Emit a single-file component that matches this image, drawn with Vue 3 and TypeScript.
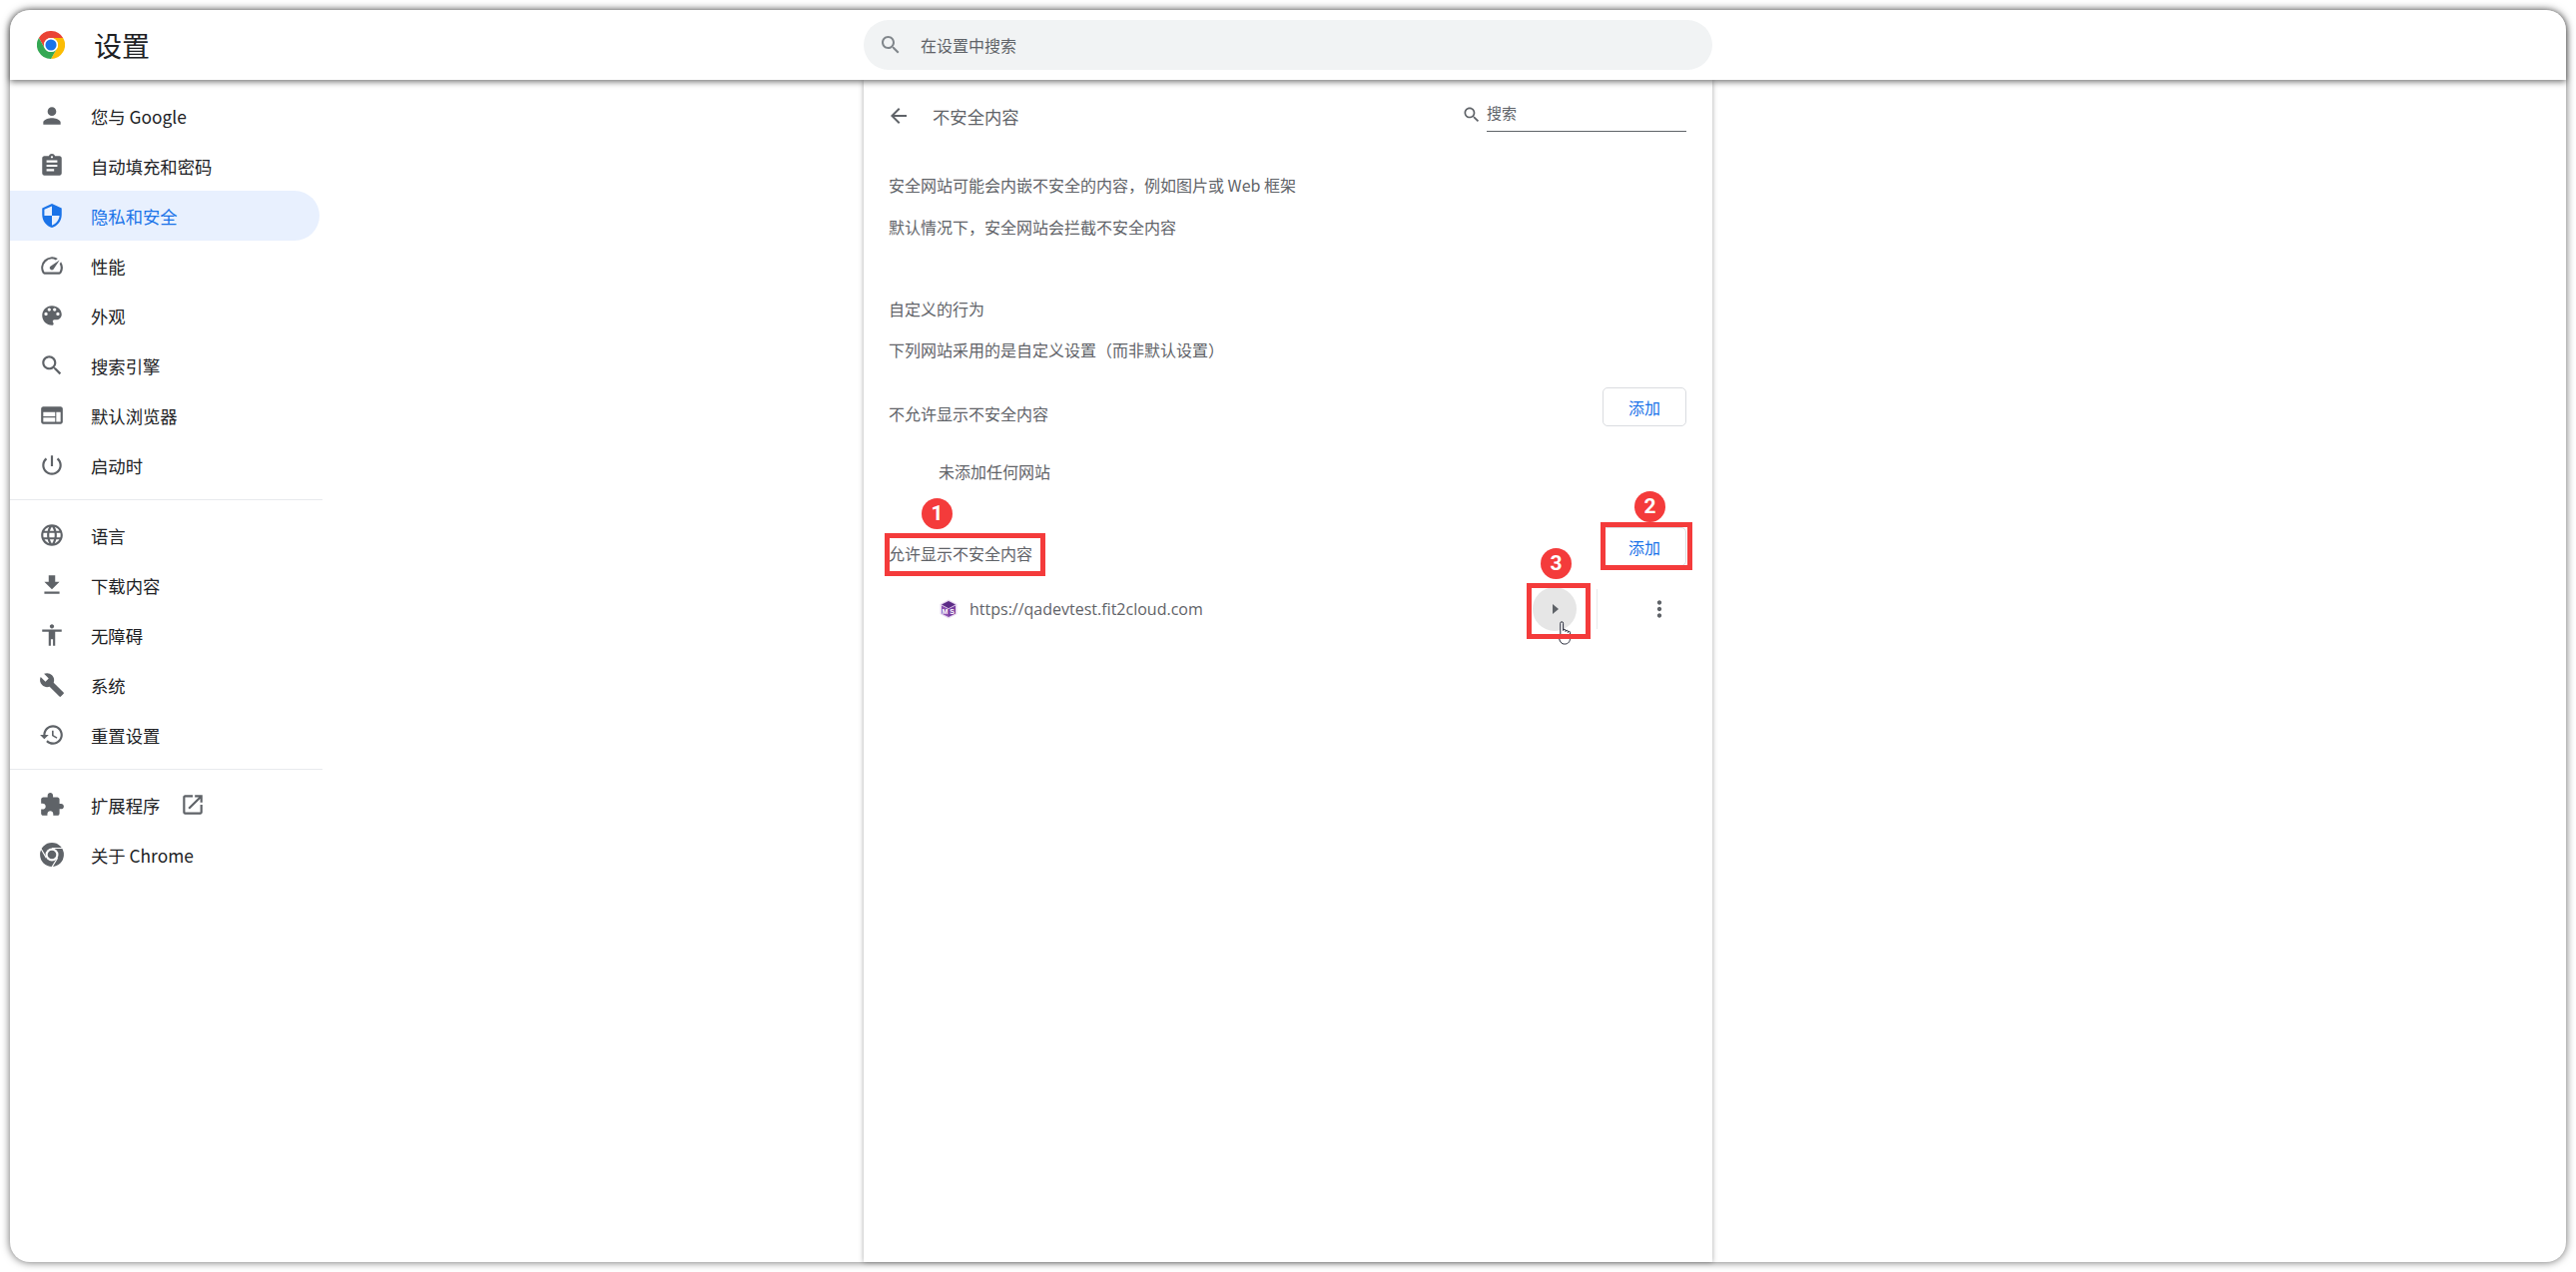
<script setup lang="ts">
interface NavItem {
  label: string
  d: string
  active?: boolean
  external?: boolean
  chrome?: boolean
}

const P = {
  person: 'M12 12c2.21 0 4-1.79 4-4s-1.79-4-4-4-4 1.79-4 4 1.79 4 4 4zm0 2c-2.67 0-8 1.34-8 4v2h16v-2c0-2.66-5.33-4-8-4z',
  clip: 'M19 3h-4.18C14.4 1.84 13.3 1 12 1c-1.3 0-2.4.84-2.82 2H5c-1.1 0-2 .9-2 2v14c0 1.1.9 2 2 2h14c1.1 0 2-.9 2-2V5c0-1.1-.9-2-2-2zm-7 0c.55 0 1 .45 1 1s-.45 1-1 1-1-.45-1-1 .45-1 1-1zm2 14H7v-2h7v2zm3-4H7v-2h10v2zm0-4H7V7h10v2z',
  shield: 'M12 1L3 5v6c0 5.55 3.84 10.74 9 12 5.16-1.26 9-6.45 9-12V5l-9-4zm0 10.99h7c-.53 4.12-3.28 7.79-7 8.94V12H5V6.3l7-3.11v8.8z',
  speed: 'M20.38 8.57l-1.23 1.85a8 8 0 0 1-.22 7.58H5.07A8 8 0 0 1 15.58 6.85l1.85-1.23A10 10 0 0 0 3.35 19a2 2 0 0 0 1.72 1h13.85a2 2 0 0 0 1.74-1 10 10 0 0 0-.27-10.44zm-9.79 6.84a2 2 0 0 0 2.83 0l5.66-8.49-8.49 5.66a2 2 0 0 0 0 2.83z',
  palette: 'M12 3c-4.97 0-9 4.03-9 9s4.03 9 9 9c.83 0 1.5-.67 1.5-1.5 0-.39-.15-.74-.39-1.01-.23-.26-.38-.61-.38-.99 0-.83.67-1.5 1.5-1.5H16c2.76 0 5-2.24 5-5 0-4.42-4.03-8-9-8zm-5.5 9c-.83 0-1.5-.67-1.5-1.5S5.67 9 6.5 9 8 9.67 8 10.5 7.33 12 6.5 12zm3-4C8.67 8 8 7.33 8 6.5S8.67 5 9.5 5s1.5.67 1.5 1.5S10.33 8 9.5 8zm5 0c-.83 0-1.5-.67-1.5-1.5S13.67 5 14.5 5s1.5.67 1.5 1.5S15.33 8 14.5 8zm3 4c-.83 0-1.5-.67-1.5-1.5S16.67 9 17.5 9s1.5.67 1.5 1.5-.67 1.5-1.5 1.5z',
  search: 'M15.5 14h-.79l-.28-.27C15.41 12.59 16 11.11 16 9.5 16 5.91 13.09 3 9.5 3S3 5.91 3 9.5 5.91 16 9.5 16c1.61 0 3.09-.59 4.23-1.57l.27.28v.79l5 4.99L20.49 19l-4.99-5zm-6 0C7.01 14 5 11.99 5 9.5S7.01 5 9.5 5 14 7.01 14 9.5 11.99 14 9.5 14z',
  web: 'M20 4H4c-1.1 0-1.99.9-1.99 2L2 18c0 1.1.9 2 2 2h16c1.1 0 2-.9 2-2V6c0-1.1-.9-2-2-2zm-5 14H4v-4h11v4zm0-5H4V9h11v4zm5 5h-4V9h4v9z',
  power: 'M13 3h-2v10h2V3zm4.83 2.17l-1.42 1.42C17.99 7.86 19 9.81 19 12c0 3.87-3.13 7-7 7s-7-3.13-7-7c0-2.19 1.01-4.14 2.58-5.42L6.17 5.17C4.23 6.82 3 9.26 3 12c0 4.97 4.03 9 9 9s9-4.03 9-9c0-2.74-1.23-5.18-3.17-6.83z',
  globe: 'M11.99 2C6.47 2 2 6.48 2 12s4.47 10 9.99 10C17.52 22 22 17.52 22 12S17.52 2 11.99 2zm6.93 6h-2.95c-.32-1.25-.78-2.45-1.38-3.56 1.84.63 3.37 1.91 4.33 3.56zM12 4.04c.83 1.2 1.48 2.53 1.91 3.96h-3.82c.43-1.43 1.08-2.76 1.91-3.96zM4.26 14C4.1 13.36 4 12.69 4 12s.1-1.36.26-2h3.38c-.08.66-.14 1.32-.14 2 0 .68.06 1.34.14 2H4.26zm.82 2h2.95c.32 1.25.78 2.45 1.38 3.56-1.84-.63-3.37-1.9-4.33-3.56zm2.95-8H5.08c.96-1.66 2.49-2.93 4.33-3.56C8.81 5.55 8.35 6.75 8.03 8zM12 19.96c-.83-1.2-1.48-2.53-1.91-3.96h3.82c-.43 1.43-1.08 2.76-1.91 3.96zM14.34 14H9.66c-.09-.66-.16-1.32-.16-2 0-.68.07-1.35.16-2h4.68c.09.65.16 1.32.16 2 0 .68-.07 1.34-.16 2zm.25 5.56c.6-1.11 1.06-2.31 1.38-3.56h2.95c-.96 1.65-2.49 2.93-4.33 3.56zM16.36 14c.08-.66.14-1.32.14-2 0-.68-.06-1.34-.14-2h3.38c.16.64.26 1.31.26 2s-.1 1.36-.26 2h-3.38z',
  download: 'M19 9h-4V3H9v6H5l7 7 7-7zM5 18v2h14v-2H5z',
  access: 'M12 2c1.1 0 2 .9 2 2s-.9 2-2 2-2-.9-2-2 .9-2 2-2zm9 7h-6v13h-2v-6h-2v6H9V9H3V7h18v2z',
  wrench: 'M22.7 19l-9.1-9.1c.9-2.3.4-5-1.5-6.9-2-2-5-2.4-7.4-1.3L9 6 6 9 1.6 4.7C.4 7.1.9 10.1 2.9 12.1c1.9 1.9 4.6 2.4 6.9 1.5l9.1 9.1c.4.4 1 .4 1.4 0l2.3-2.3c.5-.4.5-1.1.1-1.4z',
  history: 'M13 3c-4.97 0-9 4.03-9 9H1l3.89 3.89.07.14L9 12H6c0-3.87 3.13-7 7-7s7 3.13 7 7-3.13 7-7 7c-1.93 0-3.68-.79-4.94-2.06l-1.42 1.42C8.27 19.99 10.51 21 13 21c4.97 0 9-4.03 9-9s-4.03-9-9-9zm-1 5v5l4.28 2.54.72-1.21-3.5-2.08V8H12z',
  puzzle: 'M20.5 11H19V7c0-1.1-.9-2-2-2h-4V3.5C13 2.12 11.88 1 10.5 1S8 2.12 8 3.5V5H4c-1.1 0-1.99.9-1.99 2v3.8H3.5c1.49 0 2.7 1.21 2.7 2.7s-1.21 2.7-2.7 2.7H2V20c0 1.1.9 2 2 2h3.8v-1.5c0-1.49 1.21-2.7 2.7-2.7 1.49 0 2.7 1.21 2.7 2.7V22H17c1.1 0 2-.9 2-2v-4h1.5c1.38 0 2.5-1.12 2.5-2.5S21.88 11 20.5 11z',
  open: 'M19 19H5V5h7V3H5c-1.11 0-2 .9-2 2v14c0 1.1.89 2 2 2h14c1.1 0 2-.9 2-2v-7h-2v7zM14 3v2h3.59l-9.83 9.83 1.41 1.41L19 6.41V10h2V3h-7z',
  back: 'M20 11H7.83l5.59-5.59L12 4l-8 8 8 8 1.41-1.41L7.83 13H20v-2z',
}

const navGroups: NavItem[][] = [
  [
    { label: '您与 Google', d: P.person },
    { label: '自动填充和密码', d: P.clip },
    { label: '隐私和安全', d: P.shield, active: true },
    { label: '性能', d: P.speed },
    { label: '外观', d: P.palette },
    { label: '搜索引擎', d: P.search },
    { label: '默认浏览器', d: P.web },
    { label: '启动时', d: P.power },
  ],
  [
    { label: '语言', d: P.globe },
    { label: '下载内容', d: P.download },
    { label: '无障碍', d: P.access },
    { label: '系统', d: P.wrench },
    { label: '重置设置', d: P.history },
  ],
  [
    { label: '扩展程序', d: P.puzzle, external: true },
    { label: '关于 Chrome', d: '', chrome: true },
  ],
]
</script>

<template>
  <div class="window">
    <header class="topbar">
      <div class="brand">
        <svg class="logo" viewBox="0 0 48 48">
          <path fill="#ea4335" d="M3.2 12A24 24 0 0 1 44.8 12H24A12 12 0 0 0 13.6 30Z" />
          <path fill="#fbbc04" d="M44.8 12A24 24 0 0 1 24 48L34.4 30A12 12 0 0 0 24 12Z" />
          <path fill="#34a853" d="M24 48A24 24 0 0 1 3.2 12L13.6 30A12 12 0 0 0 34.4 30Z" />
          <circle cx="24" cy="24" r="12" fill="#fff" />
          <circle cx="24" cy="24" r="9.5" fill="#1a73e8" />
        </svg>
        <span class="title">设置</span>
      </div>
      <div class="searchbox">
        <svg class="search-icon" viewBox="0 0 24 24"><path :d="P.search" /></svg>
        <span>在设置中搜索</span>
      </div>
    </header>

    <div class="body">
      <nav class="sidebar">
        <template v-for="(group, g) in navGroups" :key="g">
          <div v-if="g > 0" class="divider"></div>
          <div v-for="item in group" :key="item.label" class="nav-row" :class="{ active: item.active }">
            <svg v-if="item.chrome" class="nav-icon" viewBox="0 0 24 24">
              <circle cx="12" cy="12" r="11" fill="#5f6368" />
              <circle cx="12" cy="12" r="6" fill="#fff" />
              <circle cx="12" cy="12" r="4" fill="#5f6368" />
              <path d="M12 6H22.5M6.8 15L1.6 6M17.2 15L12 23.5" stroke="#fff" stroke-width="1.1" fill="none" />
            </svg>
            <svg v-else class="nav-icon" viewBox="0 0 24 24"><path :d="item.d" /></svg>
            <span>{{ item.label }}</span>
            <svg v-if="item.external" class="nav-icon ext" viewBox="0 0 24 24"><path :d="P.open" /></svg>
          </div>
        </template>
      </nav>

      <main class="card">
        <div class="sub-head">
          <svg class="back" viewBox="0 0 24 24"><path :d="P.back" /></svg>
          <span class="sub-title">不安全内容</span>
          <div class="sub-search">
            <svg viewBox="0 0 24 24"><path :d="P.search" /></svg>
            <span class="sub-input">搜索</span>
          </div>
        </div>

        <p class="line first">安全网站可能会内嵌不安全的内容，例如图片或 Web 框架</p>
        <p class="line second">默认情况下，安全网站会拦截不安全内容</p>
        <p class="line custom">自定义的行为</p>
        <p class="line custom-sub">下列网站采用的是自定义设置（而非默认设置）</p>

        <div class="list-head block-top">
          <span>不允许显示不安全内容</span>
          <button class="add">添加</button>
        </div>
        <p class="line empty">未添加任何网站</p>

        <div class="list-head allow-top">
          <span>允许显示不安全内容</span>
          <button class="add">添加</button>
        </div>
        <div class="site">
          <svg class="favicon" viewBox="0 0 20 20">
            <polygon points="10,0.5 18.5,5 18.5,15 10,19.5 1.5,15 1.5,5" fill="#e7d9ef" />
            <polygon points="10,2 17,5.6 10,9.2 3,5.6" fill="#5b2a86" />
            <polygon points="3,6.5 10,10 10,18 3,14.4" fill="#8a4fb0" />
            <polygon points="17,6.5 10,10 10,18 17,14.4" fill="#7a3fa3" />
            <text x="3.6" y="14.6" class="fav-text">M</text>
            <text x="11.2" y="14.6" class="fav-text">S</text>
          </svg>
          <span class="url">https://qadevtest.fit2cloud.com</span>
          <div class="arrow-btn"><span class="tri"></span></div>
          <div class="vsep"></div>
          <div class="kebab">
            <svg viewBox="0 0 24 24"><path d="M12 8c1.1 0 2-.9 2-2s-.9-2-2-2-2 .9-2 2 .9 2 2 2zm0 2c-1.1 0-2 .9-2 2s.9 2 2 2 2-.9 2-2-.9-2-2-2zm0 6c-1.1 0-2 .9-2 2s.9 2 2 2 2-.9 2-2-.9-2-2-2z" /></svg>
          </div>
        </div>
      </main>
    </div>

    <!-- marks laid over the screenshot -->
    <svg class="hand" viewBox="0 0 14 24">
      <path d="M2.8 14V2.2a1.4 1.4 0 0 1 2.8 0V9.5a1.2 1.2 0 0 1 2.4 0v1a1.2 1.2 0 0 1 2.4 0v1a1.1 1.1 0 0 1 2.2 0V17c0 3.4-2 6-5 6H6.4c-2 0-3-1.5-4-3L.8 15.4c-.5-1.5 1.2-2.4 2-1.4z" />
    </svg>
    <div class="mark m1"></div>
    <div class="mark m2"></div>
    <div class="mark m3"></div>
    <div class="badge b1">1</div>
    <div class="badge b2">2</div>
    <div class="badge b3">3</div>
  </div>
</template>

<style scoped>
.window {
  position: relative;
  width: 2560px;
  height: 1254px;
  margin: 10px;
  border-radius: 20px;
  background: #fff;
  box-shadow: 0 0 9px rgba(0, 0, 0, 0.6);
  font-family: "Noto Sans CJK SC", Roboto, sans-serif;
  color: #5f6368;
}

.topbar {
  position: relative;
  z-index: 2;
  display: grid;
  grid-template-columns: 1fr 850px 1fr;
  align-items: center;
  height: 70px;
  background: #fff;
  border-radius: 20px 20px 0 0;
  box-shadow: 0 2px 6px rgba(0, 0, 0, 0.55);
}

.brand {
  display: flex;
  align-items: center;
  padding-left: 27px;
}

.logo {
  width: 28px;
  height: 28px;
}

.title {
  margin-left: 29px;
  font-size: 28px;
  line-height: 36px;
  color: #202124;
}

.searchbox {
  display: flex;
  align-items: center;
  height: 50px;
  padding-left: 15px;
  border-radius: 25px;
  background: #f1f3f4;
  font-size: 16px;
}

.search-icon {
  width: 24px;
  height: 24px;
  margin-right: 18px;
  fill: #80868b;
}

.body {
  display: grid;
  grid-template-columns: 1fr 850px 1fr;
  height: 1184px;
}

.sidebar {
  padding-top: 11px;
}

.nav-row {
  display: flex;
  align-items: center;
  width: 310px;
  height: 50px;
  padding-left: 29px;
  box-sizing: border-box;
  border-radius: 0 25px 25px 0;
  font-size: 17.33px;
  color: #202124;
}

.nav-row.active {
  background: #e8f0fe;
  color: #1a73e8;
}

.nav-icon {
  flex: none;
  width: 26px;
  height: 26px;
  margin-right: 26px;
  fill: #5f6368;
}

.active .nav-icon {
  fill: #1a73e8;
}

.nav-icon.ext {
  margin: 0 0 0 20px;
}

.divider {
  width: 313px;
  height: 1px;
  margin: 9px 0 10px;
  background: #e8eaed;
}

.divider + .nav-row {
  margin-top: 0;
}

.card {
  padding: 0 26px 0 25px;
  box-sizing: border-box;
  background: #fff;
  box-shadow: 0 0 5px rgba(0, 0, 0, 0.35);
  font-size: 16px;
}

.sub-head {
  display: flex;
  align-items: center;
  height: 72px;
}

.back {
  width: 24px;
  height: 24px;
  margin-left: -2px;
  margin-right: 22px;
  fill: #5f6368;
}

.sub-title {
  font-size: 17.33px;
}

.sub-search {
  display: flex;
  align-items: center;
  margin-left: auto;
  height: 36px;
  position: relative;
  top: -1px;
}

.sub-search svg {
  width: 20px;
  height: 20px;
  margin-right: 5px;
  fill: #5f6368;
}

.sub-input {
  width: 200px;
  height: 33px;
  line-height: 30px;
  border-bottom: 1px solid #5f6368;
  font-size: 15px;
}

.line {
  margin: 0;
  height: 34px;
  line-height: 34px;
}

.first {
  margin-top: 16px;
}

.second {
  margin-top: 8px;
}

.custom {
  margin-top: 48px;
}

.custom-sub {
  margin-top: 7px;
}

.list-head {
  display: flex;
  justify-content: space-between;
  align-items: center;
  height: 52px;
}

.block-top {
  margin-top: 21px;
}

.allow-top {
  margin-top: 39px;
}

.add {
  align-self: flex-start;
  width: 84px;
  height: 39px;
  padding: 0;
  border: 1px solid #dadce0;
  border-radius: 5px;
  background: #fff;
  color: #1a73e8;
  font: inherit;
}

.empty {
  margin-top: 15px;
  padding-left: 50px;
}

.site {
  display: flex;
  align-items: center;
  height: 60px;
  padding: 0 5px 0 50px;
}

.favicon {
  width: 20px;
  height: 20px;
  margin-right: 11px;
}

.fav-text {
  font-family: "Liberation Sans", sans-serif;
  font-size: 7px;
  font-weight: 700;
  fill: #fff;
}

.url {
  font-family: "Open Sans", sans-serif;
  font-size: 16px;
  color: #5f6368;
}

.arrow-btn {
  display: flex;
  justify-content: center;
  align-items: center;
  width: 44px;
  height: 44px;
  margin-left: auto;
  border-radius: 50%;
  background: #e6e6e6;
}

.tri {
  width: 0;
  height: 0;
  margin-left: 2px;
  border-left: 6px solid #5f6368;
  border-top: 5px solid transparent;
  border-bottom: 5px solid transparent;
}

.vsep {
  width: 1px;
  height: 40px;
  margin: 0 40px 0 20px;
  background: #e8eaed;
}

.kebab {
  display: flex;
  justify-content: center;
  align-items: center;
  width: 44px;
  height: 44px;
}

.kebab svg {
  width: 26px;
  height: 26px;
  fill: #5f6368;
}

.hand {
  position: absolute;
  left: 1550px;
  top: 612px;
  width: 14px;
  height: 24px;
  z-index: 3;
  fill: #fff;
  stroke: #1f2333;
  stroke-width: 1;
}

.mark {
  position: absolute;
  z-index: 4;
  box-sizing: border-box;
  border: 5px solid #f43b3b;
}

.m1 {
  left: 876px;
  top: 524px;
  width: 161px;
  height: 43px;
}

.m2 {
  left: 1593px;
  top: 513px;
  width: 92px;
  height: 48px;
}

.m3 {
  left: 1519px;
  top: 574px;
  width: 64px;
  height: 56px;
}

.badge {
  position: absolute;
  z-index: 5;
  width: 31px;
  height: 31px;
  border-radius: 50%;
  background: #f43b3b;
  color: #fff;
  font-family: Roboto, sans-serif;
  font-size: 21px;
  font-weight: 700;
  line-height: 31px;
  text-align: center;
}

.b1 {
  left: 913px;
  top: 489px;
}

.b2 {
  left: 1627px;
  top: 482px;
}

.b3 {
  left: 1533px;
  top: 539px;
}
</style>

<style>
html,
body {
  margin: 0;
  background: #fff;
  overflow: hidden;
}
</style>
